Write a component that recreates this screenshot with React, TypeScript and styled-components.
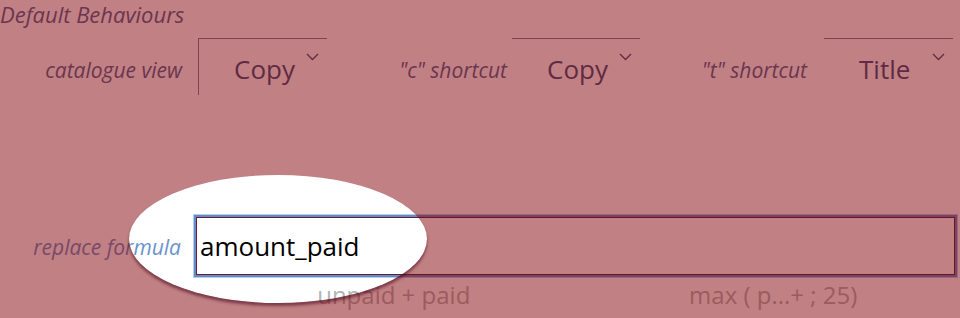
import { createGlobalStyle } from "styled-components";
import styled from "styled-components";

const Global = createGlobalStyle`
  html, body {
    margin: 0;
    padding: 0;
    background: #ffffff;
    overflow: hidden;
  }
  body {
    font-family: "Open Sans", "Noto Sans", sans-serif;
  }
`;

const Page = styled.div`
  position: relative;
  width: 960px;
  height: 318px;
  overflow: hidden;
`;

const Heading = styled.div`
  font-size: 22px;
  font-style: italic;
  line-height: 28px;
  color: #506b98;
`;

const SelectRow = styled.div`
  display: grid;
  grid-template-columns: 198px 129px 185px 128px 184px 129px;
  margin-top: 10px;
  height: 57px;
`;

const Label = styled.div<{ $pad: number }>`
  font-size: 21px;
  font-style: italic;
  color: #506b98;
  text-align: right;
  padding-right: ${(p) => p.$pad}px;
  padding-top: 18px;
  white-space: nowrap;
`;

const Select = styled.div<{ $edge?: boolean }>`
  position: relative;
  border-top: 1px solid #8c7a96;
  border-left: ${(p) => (p.$edge ? "1px solid #8c7a96" : "none")};
  font-size: 26px;
  color: #3a557f;
  padding-left: 35px;
  padding-top: 12px;
  box-sizing: border-box;
  white-space: nowrap;
`;

const Chevron = styled.svg`
  position: absolute;
  right: 8px;
  top: 14px;
`;

const FormulaRow = styled.div`
  display: grid;
  grid-template-columns: 196px 759px;
  margin-top: 120px;
`;

const FormulaLabel = styled.div`
  font-size: 21px;
  font-style: italic;
  color: #6a92cc;
  text-align: right;
  padding-right: 15px;
  align-self: center;
  padding-top: 2px;
  white-space: nowrap;
`;

const Input = styled.div`
  height: 58px;
  box-sizing: border-box;
  border: 1px solid #6a1f30;
  box-shadow: 0 0 0 2px #5f8cc8, 0 0 0 3px #b7cdee;
  margin: 2px 0;
  font-size: 26px;
  color: #000;
  padding-left: 3px;
  display: flex;
  align-items: center;
`;

const Hints = styled.div`
  display: grid;
  grid-template-columns: 1fr 1fr;
  margin-left: 196px;
  width: 759px;
  margin-top: 3px;
`;

const Hint = styled.div<{ $shift: number }>`
  font-size: 24px;
  color: #b4b4b4;
  text-align: center;
  line-height: 30px;
  white-space: nowrap;
  transform: translateX(${(p) => p.$shift}px);
`;

const Spotlight = styled.div`
  position: absolute;
  left: 129px;
  top: 175px;
  width: 298px;
  height: 128px;
  border-radius: 50%;
  box-shadow: 0 3px 3px rgba(70, 0, 25, 0.55), 0 0 0 1600px rgba(131, 1, 7, 0.5);
  pointer-events: none;
`;

function Down() {
  return (
    <Chevron width="13" height="8" viewBox="0 0 13 8">
      <path d="M1 1 L6.5 6.5 L12 1" fill="none" stroke="#3a557f" strokeWidth="1.3" />
    </Chevron>
  );
}

export default function App() {
  return (
    <Page>
      <Global />
      <Heading>Default Behaviours</Heading>
      <SelectRow>
        <Label $pad={16}>catalogue view</Label>
        <Select $edge>
          Copy
          <Down />
        </Select>
        <Label $pad={5}>"c" shortcut</Label>
        <Select>
          Copy
          <Down />
        </Select>
        <Label $pad={17}>"t" shortcut</Label>
        <Select>
          Title
          <Down />
        </Select>
      </SelectRow>
      <FormulaRow>
        <FormulaLabel>replace formula</FormulaLabel>
        <Input>amount_paid</Input>
      </FormulaRow>
      <Hints>
        <Hint $shift={8}>unpaid + paid</Hint>
        <Hint $shift={8}>max ( p...+ ; 25)</Hint>
      </Hints>
      <Spotlight />
    </Page>
  );
}
